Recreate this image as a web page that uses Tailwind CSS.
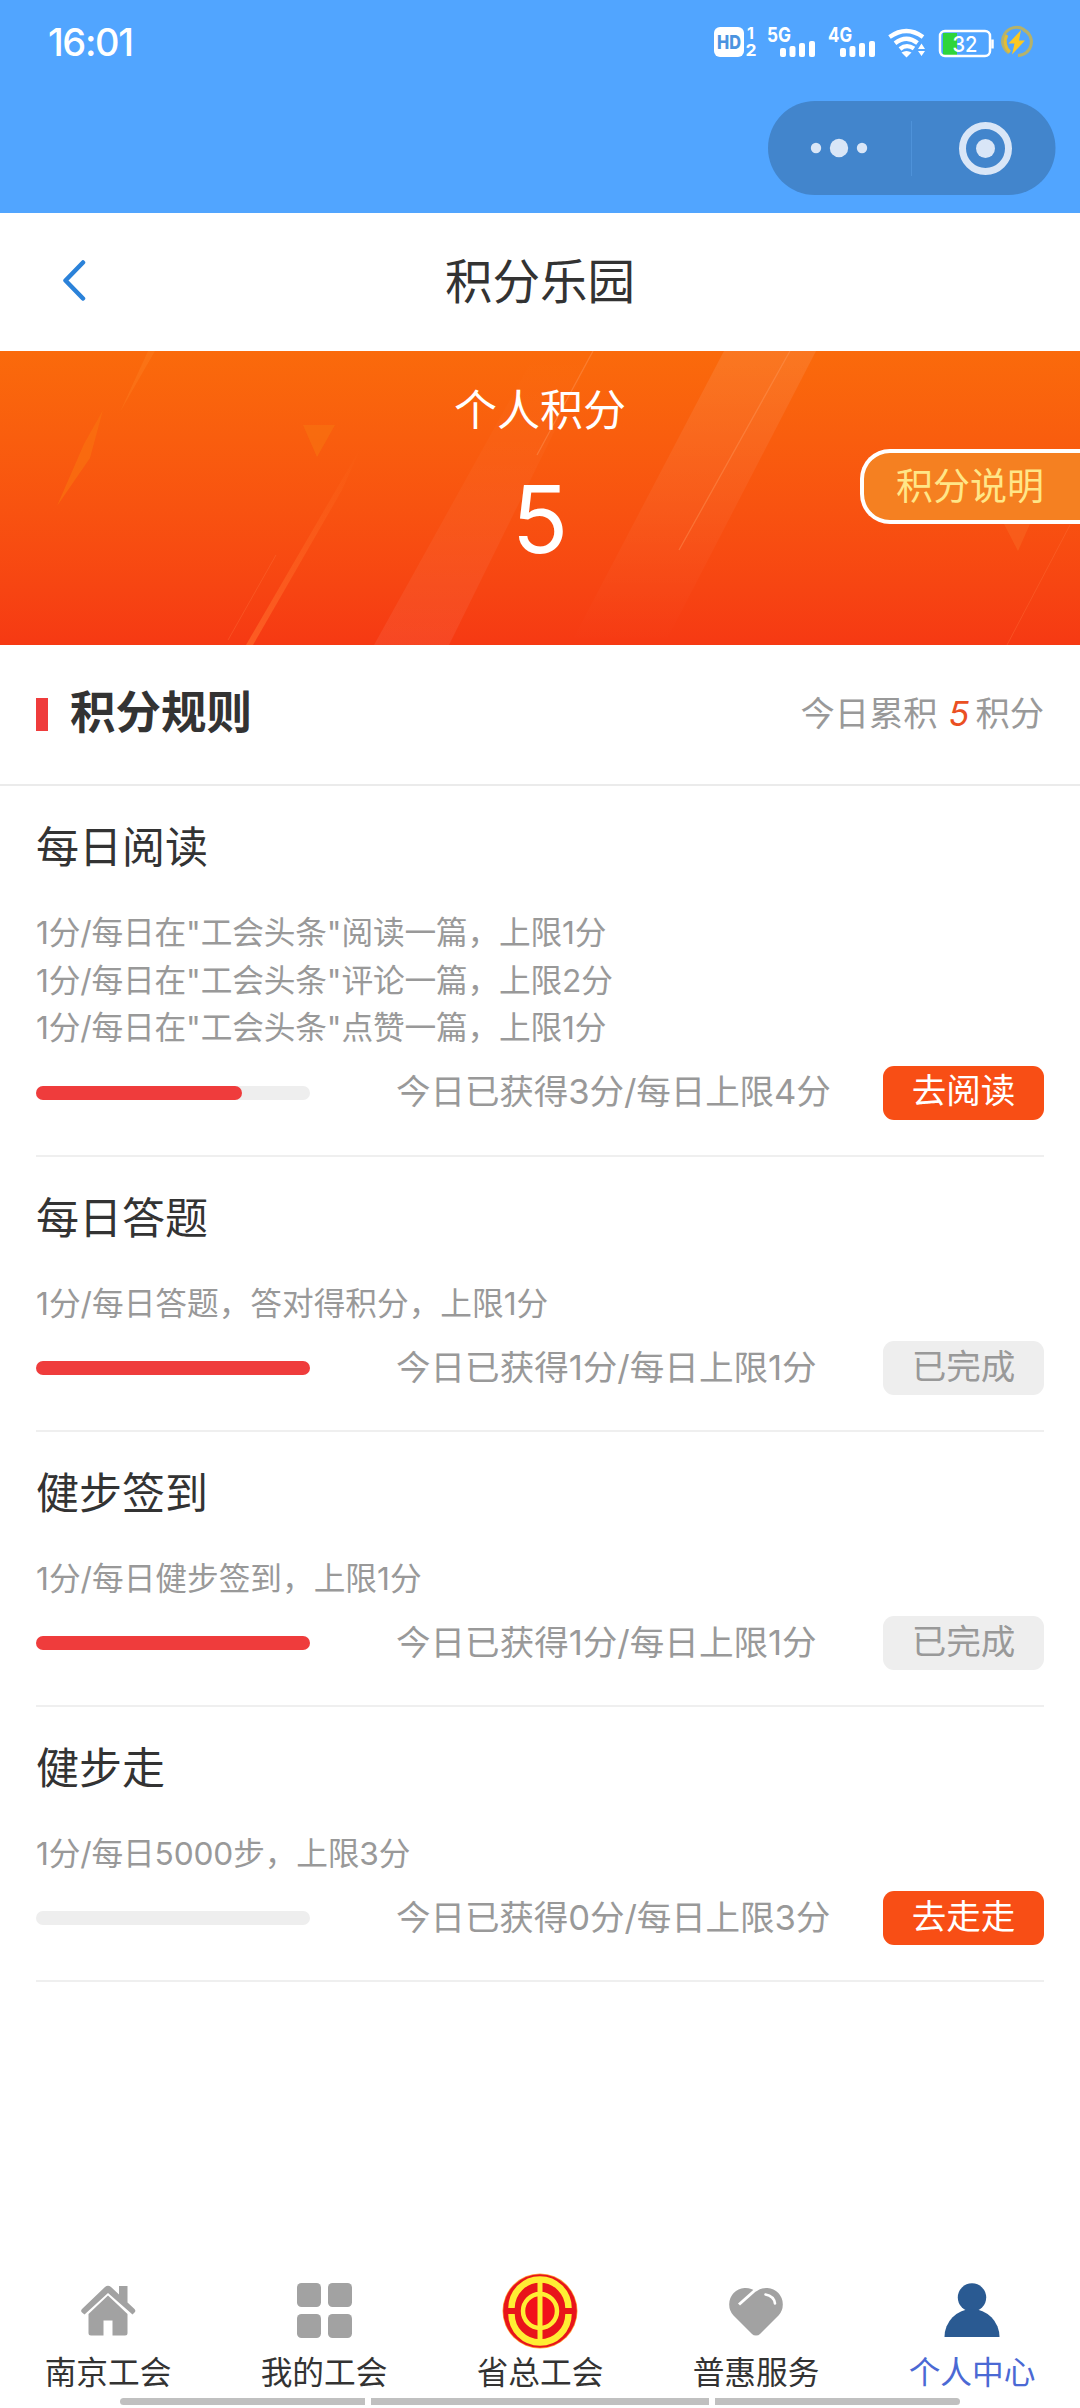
<!DOCTYPE html>
<html lang="zh-CN">
<head>
<meta charset="utf-8">
<title>积分乐园</title>
<script src="https://cdn.jsdelivr.net/npm/@tailwindcss/browser@4"></script>
</head>
<body class="bg-white">
<div class="flex h-[2408px] w-[1080px] flex-col overflow-hidden bg-white font-['Inter','Noto_Sans_CJK_SC',sans-serif] text-[#333]">

  <!-- status bar and mini-program capsule -->
  <div class="flex h-[213px] flex-col bg-[#51a5ff]">
    <div class="flex h-[84px] items-center justify-between pl-[48px] pr-[30px]">
      <span class="text-[38px] font-medium leading-none tracking-[-1.4px] text-white">16:01</span>
      <svg class="h-[84px] w-[350px]" viewBox="700 0 350 84">
        <rect x="714" y="27" width="30" height="30" rx="6" fill="#fff"/>
        <text x="717" y="48.500" font-size="18.500" font-weight="800" fill="#4b93df" textLength="24" lengthAdjust="spacingAndGlyphs">HD</text>
        <g fill="#fff" font-weight="700">
          <text x="747" y="38.500" font-size="16">1</text>
          <text x="745.500" y="56" font-size="16" textLength="11" lengthAdjust="spacingAndGlyphs">2</text>
          <text x="767" y="42" font-size="20.500" textLength="24" lengthAdjust="spacingAndGlyphs">5G</text>
          <text x="828" y="42" font-size="20.500" textLength="24" lengthAdjust="spacingAndGlyphs">4G</text>
        </g>
        <g fill="#fff">
          <rect x="780" y="48" width="6" height="9" rx="2"/><rect x="789.500" y="46" width="6" height="11" rx="2"/><rect x="799" y="43" width="6" height="14" rx="2"/><rect x="809" y="41" width="6" height="16" rx="2"/>
          <rect x="840" y="48" width="6" height="9" rx="2"/><rect x="849.500" y="46" width="6" height="11" rx="2"/><rect x="859" y="43" width="6" height="14" rx="2"/><rect x="869" y="41" width="6" height="16" rx="2"/>
          <path d="M901.500 52.500Q906.500 49.500 911.500 52.500L906.500 57.500Z"/>
          <path d="M921.500 43.500l3.500 5.500h-7zM921.500 56l3.500-5h-7z"/>
        </g>
        <g fill="none" stroke="#fff" stroke-width="4.300">
          <path d="M889.500 37Q906.500 25 923 37"/><path d="M895 43.300Q906.500 34.500 917.500 43"/><path d="M900 49Q906.500 43.500 914 48.500"/>
        </g>
        <rect x="943" y="33" width="14" height="22" fill="#2fd53b"/>
        <rect x="940" y="31" width="50" height="25" rx="5" fill="none" stroke="#fff" stroke-width="2.500"/>
        <path d="M992.500 39.500v9" stroke="#fff" stroke-width="2.500"/>
        <text x="952.500" y="52" font-size="22" font-weight="500" fill="#fff" textLength="25" lengthAdjust="spacingAndGlyphs">32</text>
        <g fill="none" stroke-width="3">
          <path d="M1024 29.500A13.500 13.500 0 0 0 1009 53" stroke="#b5b26b"/>
          <path d="M1010 52A13.500 13.500 0 0 1 1007 35" stroke="#e3bd35"/>
          <path d="M1023 29.500A13.500 13.500 0 0 1 1018 55.500" stroke="#b5b26b"/>
        </g>
        <path d="M1021 30 1008.500 43.500h6L1012 54.500 1025 40.500h-6z" fill="#fcc822"/>
      </svg>
    </div>
    <div class="flex justify-end pr-[24.500px] pt-[17px]">
      <svg class="h-[94px] w-[288px]" viewBox="768 101 288 94">
        <rect x="768" y="101" width="287.500" height="94" rx="47" fill="#4285cc"/>
        <path d="M911.500 121v55" stroke="#4e92d9"/>
        <g fill="#d9e6f7"><circle cx="816" cy="148" r="5.200"/><circle cx="839" cy="148" r="9.200"/><circle cx="862" cy="148" r="5.200"/><circle cx="985.500" cy="148.500" r="9.500"/></g>
        <circle cx="985.500" cy="148.500" r="23" fill="none" stroke="#d9e6f7" stroke-width="7"/>
      </svg>
    </div>
  </div>

  <!-- title bar -->
  <header class="grid h-[138px] grid-cols-[108px_1fr_108px] items-center">
    <svg class="ml-[60px] h-[44px] w-[30px]" viewBox="0 0 30 44"><path d="M23 2.500 5.500 20.500 23 38.500" fill="none" stroke="#2b82d9" stroke-width="4.500" stroke-linecap="round" stroke-linejoin="round"/></svg>
    <h1 class="text-center text-[47.500px] leading-none">积分乐园</h1>
  </header>

  <!-- points banner -->
  <section class="relative flex h-[294px] flex-col items-center bg-linear-to-b from-[#fa6a0b] to-[#f63913] text-white">
    <svg class="absolute inset-0 h-full w-full" viewBox="0 351 1080 294">
      <defs>
        <linearGradient id="ray" x1="0" y1="0" x2="0" y2="1"><stop offset="0" stop-color="#fff" stop-opacity=".09"/><stop offset="1" stop-color="#fff" stop-opacity="0"/></linearGradient>
        <linearGradient id="ray2" x1="0" y1="0" x2="0" y2="1"><stop offset="0" stop-color="#fff" stop-opacity="0"/><stop offset="1" stop-color="#fff" stop-opacity=".07"/></linearGradient>
        <linearGradient id="streak" x1="0" y1="0" x2="0" y2="1"><stop offset="0" stop-color="#ff7a2a" stop-opacity="0"/><stop offset="1" stop-color="#ff6a2a" stop-opacity=".7"/></linearGradient>
      </defs>
      <path d="M724 351H816L664 645H570Z" fill="url(#ray)"/>
      <path d="M537 351H594L449 645H374Z" fill="url(#ray2)"/>
      <path d="M593 351 537 455M790 351 679 550" stroke="#ff9a60" stroke-opacity=".4" stroke-width="1.300"/>
      <path d="M362 445 246 645H253L342 490Z" fill="url(#streak)"/>
      <path d="M276 555 228 640M1070 525 1007 645" stroke="#ff7540" stroke-opacity=".35"/>
      <path d="M148 351H155L120 412Z" fill="#ff9030" fill-opacity=".25"/>
      <path d="M103 410 84 444 57 506 90 458Z" fill="#f9700f" fill-opacity=".7"/>
      <path d="M303 425H335L317 457Z" fill="#f8700f" fill-opacity=".7"/>
      <path d="M1004 524H1030L1018 551Z" fill="#f86522" fill-opacity=".6"/>
    </svg>
    <div class="relative mt-[37px] text-[43px] leading-[44px]">个人积分</div>
    <div class="relative mt-[41px] text-[93px] leading-[92px]">5</div>
    <div class="absolute right-0 top-[98px] flex h-[75px] w-[220px] items-center rounded-l-[30px] border-4 border-r-0 border-white bg-[#f58021] pl-[32px] text-[37px] leading-none text-[#ffe688]">积分说明</div>
  </section>

  <!-- rules heading -->
  <div class="flex h-[141px] items-center justify-between border-b-2 border-[#ebebeb] px-[36px] pb-[1px]">
    <div class="flex items-center gap-[22px]">
      <i class="h-[33px] w-[12px] bg-[#ef3c3c]"></i>
      <h2 class="-mt-[2px] text-[45.500px] font-bold leading-none">积分规则</h2>
    </div>
    <p class="flex text-[34.300px] leading-none text-[#999]">今日累积<em class="ml-[11px] mr-[6px] text-[#ea5022]">5</em>积分</p>
  </div>

  <!-- tasks -->
  <main class="flex h-[1478px] flex-col px-[36px]">
    <section class="flex h-[370.500px] flex-col border-b-2 border-[#efefef] pt-[38px]">
      <h3 class="text-[43px] leading-[46px]">每日阅读</h3>
      <div class="mt-[39px] text-[31.680px] leading-[47.500px] tracking-[-0.15px] text-[#999]">
        <p>1分/每日在"工会头条"阅读一篇，上限1分</p><p>1分/每日在"工会头条"评论一篇，上限2分</p><p>1分/每日在"工会头条"点赞一篇，上限1分</p>
      </div>
      <div class="mt-[14px] flex h-[54px] items-center">
        <div class="h-[14px] w-[274px] rounded-full bg-[#eee]"><div class="h-full w-3/4 rounded-full bg-[#ef3c3c]"></div></div>
        <span class="ml-[86px] flex-1 whitespace-nowrap text-[34.560px] leading-none tracking-[-0.1px] text-[#999]">今日已获得3分/每日上限4分</span>
        <button class="h-[54px] w-[161px] rounded-[11px] bg-[#f84e15] pb-[2px] text-[34.560px] leading-none text-white">去阅读</button>
      </div>
    </section>
    <section class="flex h-[275px] flex-col border-b-2 border-[#efefef] pt-[38px]">
      <h3 class="text-[43px] leading-[46px]">每日答题</h3>
      <p class="mt-[39px] text-[31.680px] leading-[47.500px] text-[#999]">1分/每日答题，答对得积分，上限1分</p>
      <div class="mt-[14px] flex h-[54px] items-center">
        <div class="h-[14px] w-[274px] rounded-full bg-[#ef3c3c]"></div>
        <span class="ml-[86px] flex-1 whitespace-nowrap text-[34.560px] leading-none text-[#999]">今日已获得1分/每日上限1分</span>
        <button class="h-[54px] w-[161px] rounded-[11px] bg-[#eee] pb-[2px] text-[34.560px] leading-none text-[#999]">已完成</button>
      </div>
    </section>
    <section class="flex h-[275px] flex-col border-b-2 border-[#efefef] pt-[38px]">
      <h3 class="text-[43px] leading-[46px]">健步签到</h3>
      <p class="mt-[39px] text-[31.680px] leading-[47.500px] text-[#999]">1分/每日健步签到，上限1分</p>
      <div class="mt-[14px] flex h-[54px] items-center">
        <div class="h-[14px] w-[274px] rounded-full bg-[#ef3c3c]"></div>
        <span class="ml-[86px] flex-1 whitespace-nowrap text-[34.560px] leading-none text-[#999]">今日已获得1分/每日上限1分</span>
        <button class="h-[54px] w-[161px] rounded-[11px] bg-[#eee] pb-[2px] text-[34.560px] leading-none text-[#999]">已完成</button>
      </div>
    </section>
    <section class="flex h-[275px] flex-col border-b-2 border-[#efefef] pt-[38px]">
      <h3 class="text-[43px] leading-[46px]">健步走</h3>
      <p class="mt-[39px] text-[31.680px] leading-[47.500px] tracking-[-0.15px] text-[#999]">1分/每日5000步，上限3分</p>
      <div class="mt-[14px] flex h-[54px] items-center">
        <div class="h-[14px] w-[274px] rounded-full bg-[#eee]"></div>
        <span class="ml-[86px] flex-1 whitespace-nowrap text-[34.560px] leading-none tracking-[-0.1px] text-[#999]">今日已获得0分/每日上限3分</span>
        <button class="h-[54px] w-[161px] rounded-[11px] bg-[#f84e15] pb-[2px] text-[34.560px] leading-none text-white">去走走</button>
      </div>
    </section>
  </main>

  <!-- tab bar -->
  <nav class="grid h-[134px] grid-cols-5 pt-[7px] text-[31.680px] leading-[34px]">
    <a class="flex flex-col items-center gap-[5px]">
      <svg class="h-[80px] w-[80px]" viewBox="-40 -40 80 80" fill="#a2a2a2"><path d="M11-25h8.500v16.500L26.500-2a2.500 2.500 0 0 1 0 3.500l-2 2L0-18-23.500 3.500l-2.500-2a2.500 2.500 0 0 1 0-3.500L-3-24Q0-26.500 3-24L11-16.500Z"/><path d="M0-15.500 19.500 3V22a2.500 2.500 0 0 1-2.500 2.500H4.500V9.500H-4.500V24.500H-17A2.500 2.500 0 0 1-19.500 22V3Z"/></svg>
      <span>南京工会</span>
    </a>
    <a class="flex flex-col items-center gap-[5px]">
      <svg class="h-[80px] w-[80px]" viewBox="-40 -40 80 80" fill="#a2a2a2"><rect x="-27" y="-28" width="24" height="24" rx="4.500"/><rect x="4" y="-28" width="24" height="24" rx="4.500"/><rect x="-27" y="3" width="24" height="24" rx="4.500"/><rect x="4" y="3" width="24" height="24" rx="4.500"/></svg>
      <span>我的工会</span>
    </a>
    <a class="flex flex-col items-center gap-[5px]">
      <svg class="h-[80px] w-[80px]" viewBox="-40 -40 80 80"><circle r="37.500" fill="#ffa53a"/><circle r="36.800" fill="#e8141b"/><g fill="none" stroke="#ffee34"><path d="M-28.500-3A28.500 28.500 0 0 1 28.500-3M-28.500 3A28.500 28.500 0 0 0 28.500 3" stroke-width="6.500"/><circle r="17" stroke-width="4.500" fill="#f2101a"/><path d="M0-29V29" stroke-width="5"/></g></svg>
      <span>省总工会</span>
    </a>
    <a class="flex flex-col items-center gap-[5px]">
      <svg class="h-[80px] w-[80px]" viewBox="-40 -40 80 80"><path d="M0 24.500Q-2.500 24.500-4 23L-22.500 4.500A16.500 16.500 0 0 1 0-19.500 16.500 16.500 0 0 1 22.500 4.500L4 23Q2.500 24.500 0 24.500Z" fill="#a2a2a2"/><path d="M1-22.500-17-6.500" stroke="#fff" stroke-width="3"/><path d="M9.500-16.500Q18-15 19-7.500" fill="none" stroke="#fff" stroke-width="2.600" stroke-linecap="round"/></svg>
      <span>普惠服务</span>
    </a>
    <a class="flex flex-col items-center gap-[5px] text-[#4b69d4]">
      <svg class="h-[80px] w-[80px]" viewBox="-40 -40 80 80" fill="#2a5a92"><circle cy="-13.500" r="14.200"/><path d="M-27.500 26A27.500 28 0 0 1 27.500 26Z"/></svg>
      <span>个人中心</span>
    </a>
  </nav>
  <div class="flex h-[7px] shrink-0 justify-center gap-[6px]">
    <i class="w-[245px] rounded-l-full bg-[#c0c0c0]"></i><i class="w-[338px] bg-[#c0c0c0]"></i><i class="w-[245px] rounded-r-full bg-[#c0c0c0]"></i>
  </div>
</div>
</body>
</html>
